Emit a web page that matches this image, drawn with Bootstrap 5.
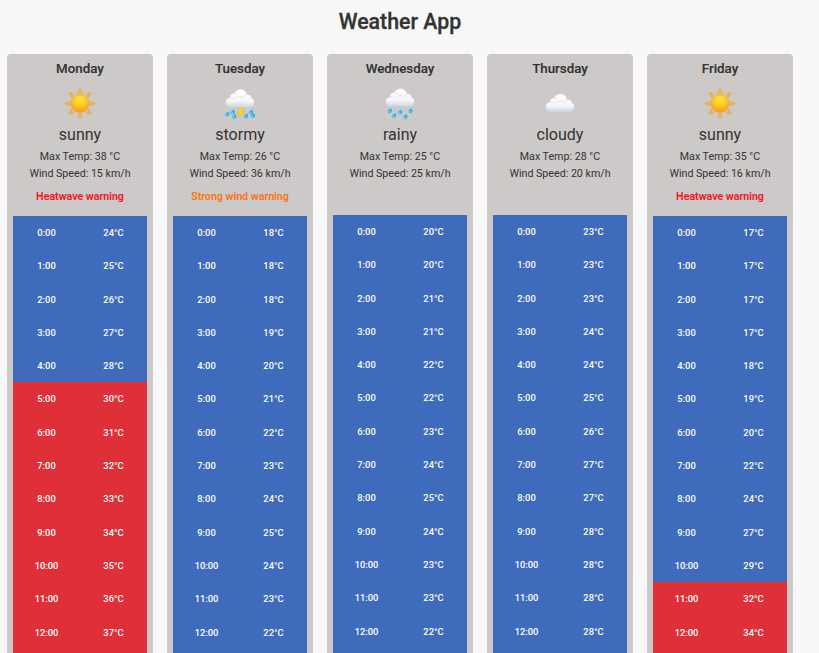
<!DOCTYPE html>
<html lang="en">
<head>
<meta charset="utf-8">
<meta name="viewport" content="width=device-width, initial-scale=1">
<title>Weather App</title>
<link href="https://cdn.jsdelivr.net/npm/bootstrap@5.3.0/dist/css/bootstrap.min.css" rel="stylesheet">
<style>
body{background:#f8f8f8;color:#333;font-family:Roboto,sans-serif;height:100vh;overflow:hidden}
.page-title{font-size:21.33px;line-height:26px;font-weight:500;-webkit-text-stroke:.3px #333;width:800px;padding-top:9px;height:54px}
.days{gap:14px;padding-left:7px;height:calc(100vh - 54px)}
.day{width:146px;background:#cdc9c8;border-radius:4px 4px 0 0;padding:6px 6px 0}
.day h2{font-size:13.33px;line-height:17px;font-weight:500;-webkit-text-stroke:.15px #333}
.day svg{width:36px;height:36px;margin-top:8px}
.kind{font-size:16px;line-height:20px;margin-top:4px}
.facts{font-size:10.67px;line-height:17px;margin-top:3px}
.alert-line{font-size:10.67px;line-height:16px;height:33.9px;padding-top:7px;font-weight:500;-webkit-text-stroke:.1px currentColor;flex:none}
.alert-line.none{height:32.9px}
.heat{color:#fa0c18}.wind{color:#f9730c}
.hour{height:33.3px;padding-top:.8px;font-size:9.33px;font-weight:500;color:#fff;flex:none}
.cool{background:#3e6bbc}.hot{background:#df2f38}
</style>
</head>
<body>
<svg width="0" height="0" class="position-absolute" aria-hidden="true">
<defs>
<radialGradient id="sunFill" cx=".5" cy=".25" r=".75"><stop offset="0" stop-color="#ffe83c"/><stop offset=".55" stop-color="#fdc51d"/><stop offset="1" stop-color="#ef9b12"/></radialGradient>
<linearGradient id="cloudFill" x1="0" y1="0" x2="0" y2="1"><stop offset="0" stop-color="#fff"/><stop offset=".65" stop-color="#f5f6f7"/><stop offset="1" stop-color="#c9d6e0"/></linearGradient>
<path id="ray" d="M18 2.6 20.3 7.6Q18 6.6 15.7 7.6Z" fill="#fdb41f" stroke="#e0a050" stroke-width=".5"/>
<g id="cloud"><path d="M8.5 23.5C5.5 23.5 3.7 21.5 3.7 18.7 3.7 16 5.2 14 7.8 13.5 7.8 10.8 10 9.2 12.2 9.3 13.2 6.6 15.7 5.2 18.4 5.2 21.9 5.2 24.6 7.5 25.1 10.6 28 10.4 29.5 12 29.7 14 31.6 15 32.4 16.8 32.2 19 32 21.8 30 23.5 27 23.5Z" fill="url(#cloudFill)" stroke="#c4ccd3" stroke-width=".4"/><path d="M7.8 13.7Q10 12.9 12.3 14.6M12.2 9.5Q14.5 9.4 15.6 11M14.2 14.2Q16 11.8 19 12.3 21.2 12.6 22 14.5M25 10.8Q22.6 11.3 22 13" fill="none" stroke="#dde1e4" stroke-width=".8"/></g>
<g id="drop"><path d="M1.2-3C2.2-1.4 2.4-.5 2 .6 1.5 2-.2 2.5-1.3 1.6-2.3.8-2.1-.7-1.2-1.5-.4-2.1.5-2.1 1.2-3Z" fill="#2eb0e8" stroke="#84cce8" stroke-width=".35"/><circle cx="-.4" cy=".4" r=".65" fill="#a8e9fb"/></g>
</defs>
</svg>
<h1 class="page-title text-center mb-0">Weather App</h1>
<main class="days d-flex" id="days"></main>
<script src="https://cdn.jsdelivr.net/npm/bootstrap@5.3.0/dist/js/bootstrap.bundle.min.js"></script>
<script>
const drops = points => points.map(([x, y]) => `<use href="#drop" transform="translate(${x} ${y})"/>`).join('');
const icons = {
  sunny: '<g transform="translate(0 .5)">' + [0,45,90,135,180,225,270,315].map(a => `<use href="#ray" transform="rotate(${a} 18 18)"/>`).join('') + '<circle cx="18" cy="18" r="9" fill="url(#sunFill)" stroke="#dda044" stroke-width=".7"/></g>',
  stormy: '<use href="#cloud" y="-1"/>' + drops([[5.2,29.6],[10.8,27.4],[12.2,31.8],[24,31.5],[28.9,27.6],[30.9,31]]) + '<path d="M18.6 23 14.5 29 18 28.4 15.2 33 23.4 26.3 19.6 26.8 22.6 23Z" fill="#fed422" stroke="#e9a91e" stroke-width=".4"/>',
  rainy: '<use href="#cloud" y="-1.8"/>' + drops([[7.7,26.2],[18,27.5],[28.4,26.2],[12,31],[23.3,32]]),
  cloudy: '<use href="#cloud" y="3.6"/>'
};
const week = [
  ['Monday','sunny',38,15,'heat','Heatwave warning',[24,25,26,27,28,30,31,32,33,34,35,36,37]],
  ['Tuesday','stormy',26,36,'wind','Strong wind warning',[18,18,18,19,20,21,22,23,24,25,24,23,22]],
  ['Wednesday','rainy',25,25,'none','',[20,20,21,21,22,22,23,24,25,24,23,23,22]],
  ['Thursday','cloudy',28,20,'none','',[23,23,23,24,24,25,26,27,27,28,28,28,28]],
  ['Friday','sunny',35,16,'heat','Heatwave warning',[17,17,17,17,18,19,20,22,24,27,29,32,34]]
];
const tone = t => t >= 30 ? 'hot' : 'cool';
document.getElementById('days').innerHTML = week.map(([name, kind, max, wind, level, warning, temps]) => `
  <section class="day flex-shrink-0 text-center d-flex flex-column">
    <h2 class="mb-0">${name}</h2>
    <svg viewBox="0 0 36 36" class="d-block mx-auto flex-shrink-0" aria-label="${kind}">${icons[kind]}</svg>
    <div class="kind">${kind}</div>
    <div class="facts">Max Temp: ${max} °C<br>Wind Speed: ${wind} km/h</div>
    <div class="alert-line ${level}">${warning}</div>
    <div class="flex-grow-1 ${tone(temps[12])}">${temps.map((t, h) => `<div class="hour d-flex align-items-center ${tone(t)}"><span class="w-50">${h}:00</span><span class="w-50">${t}°C</span></div>`).join('')}</div>
  </section>`).join('');
</script>
</body>
</html>
